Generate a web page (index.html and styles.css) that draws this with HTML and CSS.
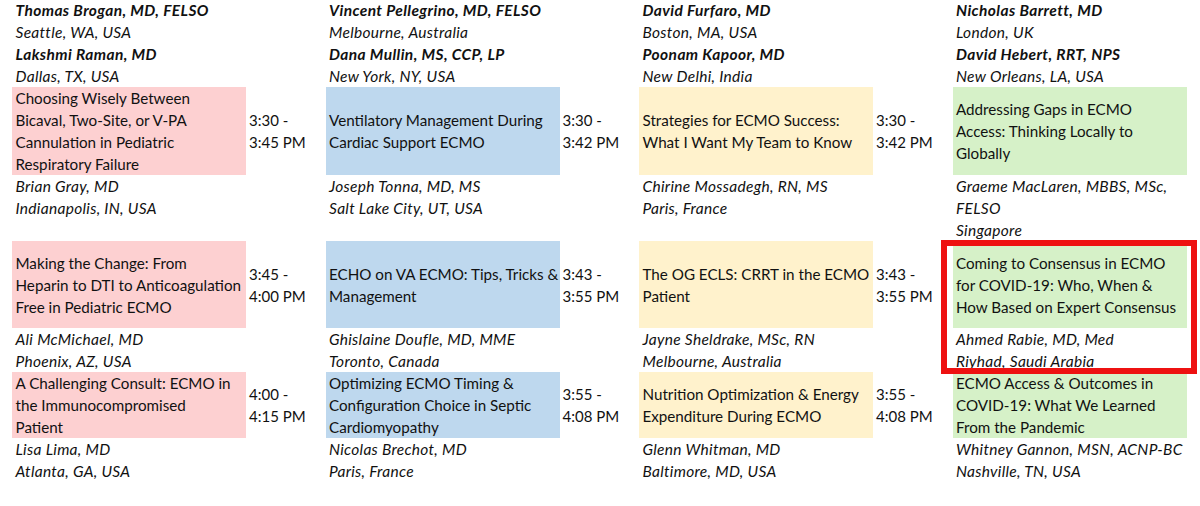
FILE: index.html
```html
<!DOCTYPE html>
<html>
<head>
<meta charset="utf-8">
<link rel="stylesheet" href="styles.css">
</head>
<body>
<div class="page">
  <div class="grid">
    <!-- Row A -->
    <div class="spk"><b>Thomas Brogan, MD, FELSO</b><br>Seattle, WA, USA<br><b>Lakshmi Raman, MD</b><br>Dallas, TX, USA</div><div class="tm"></div>
    <div class="spk"><b>Vincent Pellegrino, MD, FELSO</b><br>Melbourne, Australia<br><b>Dana Mullin, MS, CCP, LP</b><br>New York, NY, USA</div><div class="tm"></div>
    <div class="spk"><b>David Furfaro, MD</b><br>Boston, MA, USA<br><b>Poonam Kapoor, MD</b><br>New Delhi, India</div><div class="tm"></div>
    <div class="spk"><b>Nicholas Barrett, MD</b><br>London, UK<br><b>David Hebert, RRT, NPS</b><br>New Orleans, LA, USA</div><div class="tm"></div>

    <!-- Row B -->
    <div class="talk pink"><span>Choosing Wisely Between<br>Bicaval, Two-Site, or V-PA<br>Cannulation in Pediatric<br>Respiratory Failure</span></div><div class="tm"><span>3:30 -<br>3:45 PM</span></div>
    <div class="talk blue"><span>Ventilatory Management During<br>Cardiac Support ECMO</span></div><div class="tm"><span>3:30 -<br>3:42 PM</span></div>
    <div class="talk yellow"><span>Strategies for ECMO Success:<br>What I Want My Team to Know</span></div><div class="tm"><span>3:30 -<br>3:42 PM</span></div>
    <div class="talk green"><span>Addressing Gaps in ECMO<br>Access: Thinking Locally to<br>Globally</span></div><div class="tm"></div>

    <!-- Row C -->
    <div class="spk">Brian Gray, MD<br>Indianapolis, IN, USA</div><div class="tm"></div>
    <div class="spk">Joseph Tonna, MD, MS<br>Salt Lake City, UT, USA</div><div class="tm"></div>
    <div class="spk">Chirine Mossadegh, RN, MS<br>Paris, France</div><div class="tm"></div>
    <div class="spk">Graeme MacLaren, MBBS, MSc,<br>FELSO<br>Singapore</div><div class="tm"></div>

    <!-- Row D -->
    <div class="talk pink"><span>Making the Change: From<br>Heparin to DTI to Anticoagulation<br>Free in Pediatric ECMO</span></div><div class="tm"><span>3:45 -<br>4:00 PM</span></div>
    <div class="talk blue"><span>ECHO on VA ECMO: Tips, Tricks &amp;<br>Management</span></div><div class="tm"><span>3:43 -<br>3:55 PM</span></div>
    <div class="talk yellow"><span>The OG ECLS: CRRT in the ECMO<br>Patient</span></div><div class="tm"><span>3:43 -<br>3:55 PM</span></div>
    <div class="talk green"><span>Coming to Consensus in ECMO<br>for COVID-19: Who, When &amp;<br>How Based on Expert Consensus</span></div><div class="tm"></div>

    <!-- Row E -->
    <div class="spk">Ali McMichael, MD<br>Phoenix, AZ, USA</div><div class="tm"></div>
    <div class="spk">Ghislaine Doufle, MD, MME<br>Toronto, Canada</div><div class="tm"></div>
    <div class="spk">Jayne Sheldrake, MSc, RN<br>Melbourne, Australia</div><div class="tm"></div>
    <div class="spk">Ahmed Rabie, MD, Med<br>Riyhad, Saudi Arabia</div><div class="tm"></div>

    <!-- Row F -->
    <div class="talk pink"><span>A Challenging Consult: ECMO in<br>the Immunocompromised<br>Patient</span></div><div class="tm"><span>4:00 -<br>4:15 PM</span></div>
    <div class="talk blue"><span>Optimizing ECMO Timing &amp;<br>Configuration Choice in Septic<br>Cardiomyopathy</span></div><div class="tm"><span>3:55 -<br>4:08 PM</span></div>
    <div class="talk yellow"><span>Nutrition Optimization &amp; Energy<br>Expenditure During ECMO</span></div><div class="tm"><span>3:55 -<br>4:08 PM</span></div>
    <div class="talk green"><span>ECMO Access &amp; Outcomes in<br>COVID-19: What We Learned<br>From the Pandemic</span></div><div class="tm"></div>

    <!-- Row G -->
    <div class="spk">Lisa Lima, MD<br>Atlanta, GA, USA</div><div class="tm"></div>
    <div class="spk">Nicolas Brechot, MD<br>Paris, France</div><div class="tm"></div>
    <div class="spk">Glenn Whitman, MD<br>Baltimore, MD, USA</div><div class="tm"></div>
    <div class="spk">Whitney Gannon, MSN, ACNP-BC<br>Nashville, TN, USA</div><div class="tm"></div>
  </div>
  <div class="highlight"></div>
</div>
</body>
</html>
```
FILE: styles.css
```css
html, body {
  margin: 0;
  padding: 0;
  background: #ffffff;
  overflow: hidden;
}
body {
  width: 1200px;
  height: 506px;
  font-family: "Lato", "Liberation Sans", sans-serif;
  font-size: 15.5px;
  line-height: 22px;
  color: #111111;
}
.page {
  position: relative;
  width: 1200px;
  height: 506px;
  overflow: hidden;
}
.grid {
  display: grid;
  grid-template-columns: repeat(4, 234px 79.5px);
  grid-template-rows: 88px 88px 66px 87px 44px 66px 44px;
  margin: -1px 0 0 12px;
  width: 1188px;
}
.spk {
  font-style: italic;
  letter-spacing: 0.3px;
  padding: 0 3px 0 3.5px;
  white-space: nowrap;
}
.spk b {
  font-weight: 700;
  letter-spacing: 0.4px;
}
.talk {
  display: flex;
  align-items: center;
  padding: 0 3px 0 3.5px;
  font-size: 15.2px;
  white-space: nowrap;
}
.tm {
  display: flex;
  align-items: center;
  padding-left: 3px;
  font-size: 15px;
  white-space: nowrap;
}
.pink { background: #fdd0d1; }
.blue { background: #bed8ee; }
.yellow { background: #fff2cc; }
.green { background: #d6f1c8; }
.highlight {
  position: absolute;
  left: 941px;
  top: 240px;
  width: 256px;
  height: 134px;
  border: 6px solid #ee1111;
  box-sizing: border-box;
}
```
